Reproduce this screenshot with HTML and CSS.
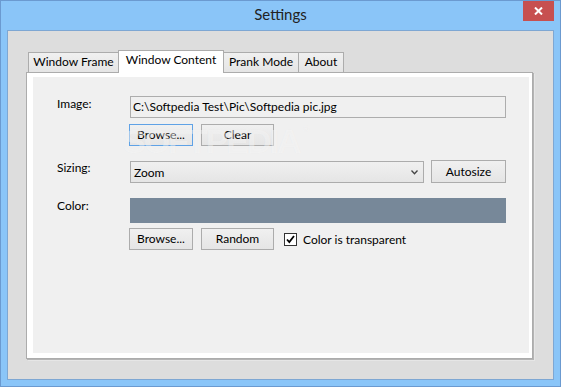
FILE: index.html
```html
<!DOCTYPE html>
<html>
<head>
<meta charset="utf-8">
<title>Settings</title>
<link rel="stylesheet" href="styles.css">
</head>
<body>
<div class="window">
  <div class="titlebar">
    <div class="title">Settings</div>
    <div class="close">
      <svg width="9" height="8" viewBox="0 0 9 8"><path d="M1 0.5 L8 7.5 M8 0.5 L1 7.5" stroke="#fff" stroke-width="2" fill="none"/></svg>
    </div>
  </div>
  <div class="client">
    <div class="tabs">
      <div class="tab tab-frame">Window Frame</div>
      <div class="tab tab-content active">Window Content</div>
      <div class="tab tab-prank">Prank Mode</div>
      <div class="tab tab-about">About</div>
    </div>
    <div class="page">
      <div class="page-inner">
        <div class="form">
          <div class="field">
            <div class="label">Image:</div>
            <div class="controls">
              <div class="textbox">C:\Softpedia Test\Pic\Softpedia pic.jpg</div>
              <div class="btn-row">
                <div class="btn btn-browse focused">Browse...</div>
                <div class="btn btn-clear">Clear</div>
              </div>
            </div>
          </div>
          <div class="field field-sizing">
            <div class="label">Sizing:</div>
            <div class="controls">
              <div class="combo-row">
                <div class="combo">
                  <span>Zoom</span>
                  <svg width="7" height="5" viewBox="0 0 7 5"><path d="M0.5 0.5 L3.5 3.8 L6.5 0.5" stroke="#444" stroke-width="1.3" fill="none"/></svg>
                </div>
                <div class="btn btn-autosize">Autosize</div>
              </div>
            </div>
          </div>
          <div class="field field-color">
            <div class="label">Color:</div>
            <div class="controls">
              <div class="swatch"></div>
              <div class="btn-row btn-row-color">
                <div class="btn btn-browse">Browse...</div>
                <div class="btn btn-clear">Random</div>
                <div class="check">
                  <span class="checkbox"><svg width="11" height="11" viewBox="0 0 11 11"><path d="M2 5.5 L4.3 8 L9 2" stroke="#000" stroke-width="1.8" fill="none"/></svg></span>
                  <span>Color is transparent</span>
                </div>
              </div>
            </div>
          </div>
        </div>
        <div class="watermark" aria-hidden="true">SOFTPEDIA<sup>®</sup></div>
      </div>
    </div>
  </div>
</div>
</body>
</html>
```

FILE: styles.css
```css
html, body {
  margin: 0;
  padding: 0;
}
body {
  font-family: Lato, "Noto Sans", sans-serif;
  font-size: 12px;
  color: #000;
}
.window {
  width: 561px;
  height: 387px;
  box-sizing: border-box;
  border: 1px solid #6b9ad0;
  background: #8ac5f8;
  padding: 0 6px 6px 6px;
  display: flex;
  flex-direction: column;
}
.titlebar {
  height: 29px;
  flex: none;
  display: grid;
  grid-template-columns: 1fr auto 1fr;
}
.title {
  grid-column: 2;
  font-size: 15px;
  line-height: 27px;
  color: #222;
}
.close {
  grid-column: 3;
  justify-self: end;
  align-self: start;
  width: 31px;
  height: 20px;
  background: #c75050;
  display: flex;
  align-items: center;
  justify-content: center;
}
.client {
  flex: 1;
  border: 1px solid #7ea7d3;
  background: #dddddd;
  padding: 19px 20px 20px 18px;
  display: flex;
  flex-direction: column;
}
.tabs {
  display: flex;
  align-items: flex-start;
  height: 22px;
  flex: none;
  padding-left: 2px;
}
.tab {
  box-sizing: border-box;
  height: 20px;
  margin-top: 2px;
  border: 1px solid #acacac;
  border-bottom: none;
  background: linear-gradient(#f0f0f0, #e5e5e5);
  line-height: 18px;
  text-align: center;
  white-space: nowrap;
}
.tab + .tab {
  margin-left: -1px;
}
.tab-frame { width: 91px; }
.tab-content { width: 106px; }
.tab-prank { width: 76px; }
.tab-about { width: 46px; }
.tab.active {
  height: 23px;
  margin-top: 0;
  background: #fff;
  position: relative;
  z-index: 1;
}
.page {
  flex: 1;
  border: 1px solid #acacac;
  background: #fff;
  padding: 4px 3px 5px 6px;
  box-shadow: 1px 1px 0 #b4b4b4, 2px 2px 0 #e6e6e6;
  display: flex;
}
.page-inner {
  flex: 1;
  background: #f0f0f0;
  position: relative;
}
.form {
  padding: 19px 23px 0 24px;
}
.field {
  display: grid;
  grid-template-columns: 72px 1fr;
}
.field-sizing { margin-top: 14px; }
.field-color { margin-top: 15px; }
.label {
  line-height: 15px;
}
.textbox {
  margin-left: 1px;
  height: 22px;
  box-sizing: border-box;
  border: 1px solid #adadad;
  background: #f0f0f0;
  padding: 0 2px;
  line-height: 20px;
  white-space: nowrap;
}
.btn-row {
  display: flex;
  align-items: center;
  gap: 8px;
  margin-top: 6px;
}
.btn-row-color {
  margin-top: 5px;
}
.btn {
  box-sizing: border-box;
  height: 22px;
  border: 1px solid #acacac;
  background: linear-gradient(#f0f0f0, #e5e5e5);
  line-height: 20px;
  text-align: center;
  white-space: nowrap;
}
.btn.focused {
  border-color: #5fa2e6;
}
.btn-browse { width: 64px; }
.btn-clear { width: 73px; }
.btn-autosize {
  width: 75px;
  height: 23px;
  line-height: 21px;
}
.combo-row {
  display: flex;
  align-items: flex-start;
  gap: 7px;
}
.combo {
  box-sizing: border-box;
  width: 294px;
  height: 22px;
  margin-left: 1px;
  margin-top: 1px;
  border: 1px solid #acacac;
  background: linear-gradient(#f0f0f0, #e5e5e5);
  padding: 0 5px 0 3px;
  display: flex;
  align-items: center;
  justify-content: space-between;
}
.swatch {
  margin-left: 1px;
  width: 376px;
  height: 25px;
  background: #778899;
}
.check {
  margin-left: 2px;
  display: flex;
  align-items: center;
  gap: 6px;
}
.checkbox {
  box-sizing: border-box;
  width: 13px;
  height: 13px;
  border: 1px solid #333;
  background: #fff;
  display: flex;
  align-items: center;
  justify-content: center;
}
.watermark {
  position: absolute;
  left: 90px;
  top: 47px;
  font-family: "Liberation Sans", sans-serif;
  font-weight: bold;
  font-size: 34px;
  line-height: 34px;
  letter-spacing: -2px;
  color: rgba(255, 255, 255, 0.45);
  text-shadow: 0 0 1px rgba(0, 0, 0, 0.04);
  pointer-events: none;
  white-space: nowrap;
}
.watermark sup {
  font-size: 9px;
  vertical-align: top;
  line-height: 10px;
  margin-left: 3px;
}
```
